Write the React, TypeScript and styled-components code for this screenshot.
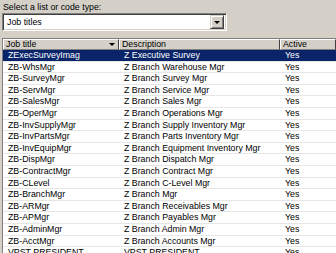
import styled, { createGlobalStyle } from 'styled-components';

const GlobalStyle = createGlobalStyle`
    html, body {
        margin: 0;
        padding: 0;
        background: #d4d0c8;
        overflow: hidden;
    }
    body {
        font-family: 'Liberation Sans', Arial, sans-serif;
        font-size: 8.8px;
        color: #000;
    }
`;

const Panel = styled.div`
    width: 336px;
    height: 253px;
    display: flex;
    flex-direction: column;
    padding: 2px 0 0 2px;
    box-sizing: border-box;
    overflow: hidden;
`;

const Caption = styled.div`
    padding-left: 1px;
    line-height: 10px;
    height: 11px;
`;

const Combo = styled.div`
    width: 225px;
    height: 18px;
    box-sizing: border-box;
    background: #fff;
    border-top: 1px solid #808080;
    border-left: 1px solid #808080;
    border-right: 1px solid #fff;
    border-bottom: 1px solid #fff;
    box-shadow: inset 1px 1px 0 #404040, inset -1px -1px 0 #d4d0c8;
    display: flex;
    align-items: center;
    justify-content: space-between;
    padding: 2px 2px 2px 4px;
`;

const ComboText = styled.span`
    line-height: 12px;
`;

const ComboButton = styled.div`
    width: 14px;
    height: 14px;
    box-sizing: border-box;
    background: #d4d0c8;
    border-top: 1px solid #d4d0c8;
    border-left: 1px solid #d4d0c8;
    border-right: 1px solid #404040;
    border-bottom: 1px solid #404040;
    box-shadow: inset 1px 1px 0 #fff, inset -1px -1px 0 #808080;
    display: flex;
    align-items: center;
    justify-content: center;
`;

const Arrow = styled.div`
    width: 0;
    height: 0;
    border-left: 3px solid transparent;
    border-right: 3px solid transparent;
    border-top: 3px solid #000;
`;

const List = styled.div`
    margin-top: 7px;
    flex: 1;
    background: #fff;
    border-top: 1px solid #808080;
    border-left: 1px solid #808080;
    overflow: hidden;
`;

const cols = '116px 161px 1fr';

const Header = styled.div`
    display: grid;
    grid-template-columns: ${cols};
    height: 11px;
`;

const HeadCell = styled.div`
    position: relative;
    box-sizing: border-box;
    background: #d4d0c8;
    border-top: 1px solid #fff;
    border-left: 1px solid #fff;
    border-right: 1px solid #404040;
    border-bottom: 1px solid #808080;
    padding-left: 2px;
    line-height: 9px;
    white-space: nowrap;
    overflow: hidden;
`;

const SortArrow = styled.div`
    position: absolute;
    right: 3px;
    top: 3px;
    width: 0;
    height: 0;
    border-left: 3px solid transparent;
    border-right: 3px solid transparent;
    border-top: 3px solid #000;
`;

const Row = styled.div<{ $selected?: boolean }>`
    display: grid;
    grid-template-columns: ${cols};
    height: 11.6px;
    box-sizing: border-box;
    border-bottom: 1px solid #e6e6e6;
    background: ${(p) => (p.$selected ? '#0a246a' : '#fff')};
    color: ${(p) => (p.$selected ? '#fff' : '#000')};
    line-height: 10.6px;
    white-space: nowrap;
`;

const Cell = styled.div`
    padding-left: 5px;
    overflow: hidden;
`;

const rows = [
    ['ZExecSurveyImag', 'Z Executive Survey'],
    ['ZB-WhsMgr', 'Z Branch Warehouse Mgr'],
    ['ZB-SurveyMgr', 'Z Branch Survey Mgr'],
    ['ZB-ServMgr', 'Z Branch Service Mgr'],
    ['ZB-SalesMgr', 'Z Branch Sales Mgr'],
    ['ZB-OperMgr', 'Z Branch Operations Mgr'],
    ['ZB-InvSupplyMgr', 'Z Branch Supply Inventory Mgr'],
    ['ZB-InvPartsMgr', 'Z Branch Parts Inventory Mgr'],
    ['ZB-InvEquipMgr', 'Z Branch Equipment Inventory Mgr'],
    ['ZB-DispMgr', 'Z Branch Dispatch Mgr'],
    ['ZB-ContractMgr', 'Z Branch Contract Mgr'],
    ['ZB-CLevel', 'Z Branch C-Level Mgr'],
    ['ZB-BranchMgr', 'Z Branch Mgr'],
    ['ZB-ARMgr', 'Z Branch Receivables Mgr'],
    ['ZB-APMgr', 'Z Branch Payables Mgr'],
    ['ZB-AdminMgr', 'Z Branch Admin Mgr'],
    ['ZB-AcctMgr', 'Z Branch Accounts Mgr'],
    ['VPST PRESIDENT', 'VPST PRESIDENT'],
];

export default function App() {
    return (
        <Panel>
            <GlobalStyle />
            <Caption>Select a list or code type:</Caption>
            <Combo>
                <ComboText>Job titles</ComboText>
                <ComboButton>
                    <Arrow />
                </ComboButton>
            </Combo>
            <List>
                <Header>
                    <HeadCell>
                        Job title
                        <SortArrow />
                    </HeadCell>
                    <HeadCell>Description</HeadCell>
                    <HeadCell>Active</HeadCell>
                </Header>
                {rows.map((r, i) => (
                    <Row key={r[0]} $selected={i === 0}>
                        <Cell>{r[0]}</Cell>
                        <Cell>{r[1]}</Cell>
                        <Cell>Yes</Cell>
                    </Row>
                ))}
            </List>
        </Panel>
    );
}
